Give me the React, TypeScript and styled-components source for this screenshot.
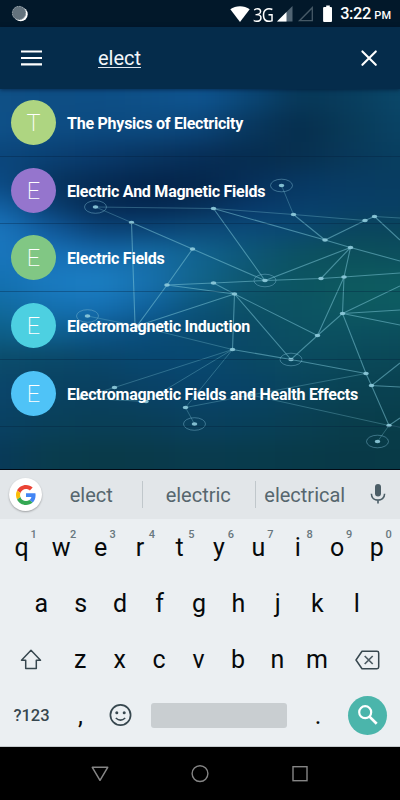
import React from "react";
import styled, { createGlobalStyle } from "styled-components";

const GlobalStyle = createGlobalStyle`
  * { box-sizing: border-box; }
  body { margin: 0; background: #000; font-family: Roboto, "Noto Sans", sans-serif; }
  svg { display: block; flex: none; }
`;

const Screen = styled.div`
  width: 400px;
  height: 800px;
  display: flex;
  flex-direction: column;
  overflow: hidden;
`;

const StatusBar = styled.header`
  height: 27px;
  flex: none;
  background: #02182a;
  display: flex;
  align-items: center;
  justify-content: space-between;
  padding: 0 9px 0 11px;
  color: #fff;
`;

const StatusGroup = styled.div`
  display: flex;
  align-items: center;
`;

const NetworkType = styled.span`
  font: 400 20.5px/26px "Open Sans", "Noto Sans", sans-serif;
  letter-spacing: -1px;
  width: 22px;
  margin: 0 2px 0 3px;
  transform: scaleX(0.82);
  transform-origin: left;
`;

const Clock = styled.span`
  font: 500 16.3px/26px Roboto, sans-serif;
  letter-spacing: -0.35px;
  margin-left: 4px;
  white-space: nowrap;
  transform: translateY(1px);
`;

const Meridiem = styled.small`
  font-size: 11px;
  letter-spacing: 0;
  margin-left: 3.5px;
`;

const AppBar = styled.div`
  height: 62px;
  flex: none;
  background: #052c4b;
  display: flex;
  align-items: center;
  padding: 0 22px 0 21px;
  z-index: 1;
  box-shadow: 0 1px 4px rgba(0, 15, 40, 0.55);
`;

const Query = styled.div`
  flex: 1;
  margin-left: 56px;
  color: #f3f7fa;
  font-size: 20px;
`;

const QueryText = styled.span`
  border-bottom: 1px solid #dfe6ee;
  display: inline-block;
  height: 22px;
  line-height: 25px;
`;

const Results = styled.main`
  height: 381px;
  flex: none;
  position: relative;
  overflow: hidden;
  background: #083f60;
  border-bottom: 1px solid #020b16;
`;

const Backdrop = styled.svg`
  position: absolute;
  inset: 0;
`;

const Row = styled.div`
  position: relative;
  height: 67.7px;
  display: flex;
  align-items: center;
  padding-left: 11px;
  border-bottom: 1px solid rgba(3, 28, 55, 0.32);
`;

const Avatar = styled.div<{ $color: string }>`
  width: 45px;
  height: 45px;
  border-radius: 50%;
  background: ${(p) => p.$color};
  color: #fff;
  font-size: 23.5px;
  font-weight: 200;
  line-height: 46px;
  text-align: center;
`;

const Title = styled.div`
  margin-left: 11px;
  color: #fff;
  font-size: 16px;
  font-weight: 700;
  letter-spacing: -0.24px;
  white-space: nowrap;
  transform: translateY(0.5px);
`;

const Suggestions = styled.div`
  height: 49px;
  flex: none;
  background: #e2e6e9;
  display: flex;
  align-items: center;
  padding: 0 14px 0 9px;
`;

const GoogleButton = styled.div`
  width: 33px;
  height: 33px;
  flex: none;
  border-radius: 50%;
  background: #fff;
  box-shadow: 0 1px 2px rgba(0, 0, 0, 0.3);
  display: flex;
  align-items: center;
  justify-content: center;
`;

const Suggestion = styled.div<{ $width: number; $divided?: boolean }>`
  width: ${(p) => p.$width}px;
  flex: none;
  height: 27px;
  padding-right: 1.5px;
  line-height: 29px;
  font-size: 20px;
  text-align: center;
  color: #56666e;
  border-left: ${(p) => (p.$divided ? "1px solid #c0c7cb" : "none")};
`;

const MicButton = styled.div`
  margin-left: auto;
`;

const Keyboard = styled.div`
  height: 228px;
  flex: none;
  background: #ebeff2;
  border-bottom: 1px solid #c5cacd;
`;

const KeyRow = styled.div<{ $inset?: number }>`
  height: 56px;
  display: flex;
  align-items: center;
  padding-left: ${(p) => p.$inset ?? 2}px;
`;

const Key = styled.div<{ $width?: number }>`
  position: relative;
  width: ${(p) => p.$width ?? 39.45}px;
  flex: none;
  height: 56px;
  padding-top: 1px;
  display: flex;
  align-items: center;
  justify-content: center;
  color: #06090b;
  font-size: 25px;
`;

const Hint = styled.span`
  position: absolute;
  top: 9px;
  left: 28.5px;
  font-size: 11px;
  font-weight: 500;
  line-height: 13px;
  color: #68777e;
`;

const Symbols = styled.div`
  width: 59px;
  text-align: center;
  color: #37474f;
  font-size: 16.5px;
  font-weight: 500;
`;

const Space = styled.div`
  width: 136px;
  height: 25px;
  margin: 0 11px;
  border-radius: 3px;
  background: #c9ced1;
`;

const SearchButton = styled.div`
  width: 39px;
  height: 39px;
  margin-left: 10px;
  border-radius: 50%;
  background: #4bb5ab;
  display: flex;
  align-items: center;
  justify-content: center;
`;

const NavBar = styled.nav`
  height: 53px;
  flex: none;
  background: #000;
  display: flex;
  align-items: center;
  justify-content: space-between;
  padding: 0 90px;
`;

const results = [
  { letter: "T", color: "#aed581", title: "The Physics of Electricity" },
  { letter: "E", color: "#9575cd", title: "Electric And Magnetic Fields" },
  { letter: "E", color: "#81c784", title: "Electric Fields" },
  { letter: "E", color: "#4dd0e1", title: "Electromagnetic Induction" },
  { letter: "E", color: "#4fc3f7", title: "Electromagnetic Fields and Health Effects" },
];

// Colour samples of the glow behind the list: one line per band, left to right every 50px.
const glow = [
  { y: 60, h: 52, tones: "0f5086 0e4e84 0d4e85 0e5189 0e5490 0a4675 073757 083d5d 0a4769" },
  { y: 112, h: 30, tones: "0e5088 0d4d84 0c4a80 0c4a80 0b4579 08375e 062e4d 083a58 094365" },
  { y: 142, h: 28, tones: "0b467b 0a4073 09396a 083460 072e57 062c50 07304f 08385a 083f60" },
  { y: 170, h: 26, tones: "0c4c86 07345f 052b54 04254c 04264b 062f59 073863 083c63 083d62" },
  { y: 196, h: 22, tones: "1363a6 0a3e70 052a52 042750 062e57 08386a 083f6c 083f68 083f64" },
  { y: 218, h: 24, tones: "1a76be 115a9c 0b4479 0b4678 0c4b7a 0b4b79 0a4870 0a465f 0a465b" },
  { y: 242, h: 26, tones: "1875bb 1872b8 156bae 156ca5 11638f 0d5777 0c5161 0c505b 0c4f5d" },
  { y: 268, h: 28, tones: "1370b0 1a7ac0 1b7fc3 176fac 116389 0d566d 0c5461 0d595f 0d5b60" },
  { y: 296, h: 24, tones: "106a9d 1470b0 1570b3 0f609a 0b5277 0c5065 0c5362 0d5961 0d5b62" },
  { y: 320, h: 26, tones: "0d5f88 0f6292 0c5589 094d7b 094a6e 0a4a66 0b5061 0b5060 0b4e5c" },
  { y: 346, h: 28, tones: "0b4c6b 0a4867 09466a 084770 084871 094864 0a4b60 0a495a 0a4756" },
  { y: 374, h: 34, tones: "0a456b 094262 09405f 094266 08436a 084366 09445c 094253 094150" },
  { y: 408, h: 32, tones: "094163 09405a 093f56 093f58 09405e 08405a 093f53 093d4b 083d4a" },
  { y: 440, h: 80, tones: "083a59 093c4d 093a49 093a4a 093b4e 083b4c 083a49 083947 083a47" },
];

const strongEdges = [
  "M131.5 222.5L192.5 249L265 280.5", "M192.5 249L167 285L137 326L234.5 294",
  "M213.5 208.5L325 240L350.5 247.5L400 261", "M213.5 208.5L265 280.5L350.5 247.5",
  "M293.5 214.5L325 240L365 220.5L374.5 216.5L400 240", "M350.5 247.5L321 278.5",
  "M350.5 247.5L344 277L342.5 313.5L317.5 335.5L291 359.5L234.5 294L317.5 335.5L344 277L400 273",
  "M265 280.5L321 278.5L344 277", "M213.5 283L234.5 294L232.5 349.5",
  "M400 286L342.5 313.5L400 310", "M400 325L342.5 313.5L366 373.5L371.5 385.5L389 425.5L400 418",
  "M400 363L371.5 385.5L400 387", "M131.5 222.5L135 324", "M167 285L213.5 283L265 280.5", "M167 285L234.5 294",
  "M232.5 349.5L291 359.5L366 373.5",
];

const faintEdges = [
  "M131.5 222.5L95.5 207L213.5 208.5L293.5 214.5L281.5 185.5", "M293.5 214.5L365 220.5",
  "M374.5 216.5L400 218",
  "M87.5 316L137 326L232.5 349.5", "M366 373.5L251 395L389 425.5L377.5 441.5",
  "M232.5 349.5L114.5 387.5L80 398L146 401.5L232.5 349.5L185.5 407.5L194.5 424",
  "M185.5 407.5L251 395", "M389 425.5L400 427",
];

const ringed = [[95.5, 207], [281.5, 185.5], [265, 280.5], [87.5, 316], [291, 359.5], [194.5, 424], [377.5, 441.5]];

const nodes = [
  ...ringed, [131.5, 222.5], [192.5, 249], [213.5, 208.5], [293.5, 214.5], [365, 220.5], [374.5, 216.5],
  [325, 240], [350.5, 247.5], [321, 278.5], [344, 277], [167, 285], [137, 326], [114.5, 387.5], [80, 398],
  [146, 401.5], [185.5, 407.5], [213.5, 283], [234.5, 294], [342.5, 313.5], [317.5, 335.5], [232.5, 349.5],
  [366, 373.5], [371.5, 385.5], [389, 425.5], [251, 395],
];

const Network = () => (
  <Backdrop width="400" height="380" viewBox="0 89 400 380" fill="none">
    <filter id="soften" filterUnits="userSpaceOnUse" x="-60" y="40" width="520" height="500" colorInterpolationFilters="sRGB">
      <feGaussianBlur stdDeviation="20 10" />
    </filter>
    <g filter="url(#soften)">
      {glow.map((band) =>
        band.tones.split(" ").map((tone, i) => (
          <rect
            key={`${band.y}-${i}`}
            x={i === 0 ? -60 : i * 50 - 25}
            y={band.y}
            width={i === 0 || i === 8 ? 86 : 51}
            height={band.h + 1}
            fill={`#${tone}`}
          />
        )),
      )}
    </g>
    <path d={strongEdges.join("")} stroke="#7fc8d8" strokeOpacity=".52" strokeWidth="1.1" />
    <path d={faintEdges.join("")} stroke="#7fc8d8" strokeOpacity=".32" />
    {ringed.map(([x, y]) => (
      <ellipse key={`${x}-${y}`} cx={x} cy={y} rx="11" ry="6.3" stroke="#7cb8d0" strokeOpacity=".45" />
    ))}
    {nodes.map(([x, y]) => (
      <ellipse key={`${x}-${y}`} cx={x} cy={y} rx="2.8" ry="1.7" fill="#8fcbdc" fillOpacity=".9" />
    ))}
  </Backdrop>
);

const topKeys = "qwertyuiop".split("");

export default function App() {
  return (
    <>
      <GlobalStyle />
      <Screen>
        <StatusBar>
          <svg width="18" height="18" viewBox="0 0 18 18">
            <circle cx="9.7" cy="9.3" r="7" fill="#fff" />
            <circle cx="8" cy="8" r="7" fill="#63727d" />
            <circle cx="8" cy="8" r="6.6" fill="none" stroke="#a2adb4" strokeWidth="1" strokeDasharray="1.3 1.3" />
          </svg>
          <StatusGroup>
            <svg width="20" height="16" viewBox="0 0 20 16">
              <path d="M0.3 3.2C5.7-.8 14.3-.8 19.7 3.2L10 16z" fill="#fff" />
            </svg>
            <NetworkType>3G</NetworkType>
            <svg width="16" height="16" viewBox="0 0 16 16">
              <path d="M15.5 0v15.5H0z" fill="#516473" />
              <path d="M9.5 6v9.5H0z" fill="#fff" />
            </svg>
            <svg width="25" height="16" viewBox="0 0 25 16">
              <path d="M19.3 1.7v13H6.5z" fill="none" stroke="#465966" strokeWidth="1.3" />
            </svg>
            <svg width="18" height="18" viewBox="0 0 18 18">
              <path d="M8.2.6h3.6v1.5h1.2q1 0 1 1V16q0 1-1 1H6.1q-1 0-1-1V3.1q0-1 1-1h2.1z" fill="#fff" />
            </svg>
            <Clock>3:22<Meridiem>PM</Meridiem></Clock>
          </StatusGroup>
        </StatusBar>

        <AppBar>
          <svg width="21" height="16" viewBox="0 0 21 16">
            <path d="M0 1.5h21M0 8h21M0 14.3h21" stroke="#fff" strokeWidth="2.2" />
          </svg>
          <Query><QueryText>elect</QueryText></Query>
          <svg width="18" height="18" viewBox="0 0 18 18">
            <path d="M2.4 2.4l13.4 13.4M15.8 2.4L2.4 15.8" stroke="#fff" strokeWidth="2.1" strokeLinecap="round" />
          </svg>
        </AppBar>

        <Results>
          <Network />
          {results.map((r) => (
            <Row key={r.title}>
              <Avatar $color={r.color}>{r.letter}</Avatar>
              <Title>{r.title}</Title>
            </Row>
          ))}
        </Results>

        <Suggestions>
          <GoogleButton>
            <svg width="20" height="20" viewBox="0 0 48 48">
              <path fill="#ea4335" d="M24 9.5c3.54 0 6.71 1.22 9.21 3.6l6.85-6.85C35.9 2.38 30.47 0 24 0 14.62 0 6.51 5.38 2.56 13.22l7.98 6.19C12.43 13.72 17.74 9.5 24 9.5z" />
              <path fill="#4285f4" d="M46.98 24.55c0-1.57-.15-3.09-.38-4.55H24v9.02h12.94c-.58 2.96-2.26 5.48-4.78 7.18l7.73 6c4.51-4.18 7.09-10.36 7.09-17.65z" />
              <path fill="#fbbc05" d="M10.53 28.59A14.5 14.5 0 0 1 9.77 24c0-1.6.27-3.14.76-4.59l-7.98-6.19A23.9 23.9 0 0 0 0 24c0 3.88.92 7.54 2.56 10.78z" />
              <path fill="#34a853" d="M24 48c6.48 0 11.93-2.13 15.89-5.81l-7.73-6c-2.15 1.45-4.92 2.3-8.16 2.3-6.26 0-11.57-4.22-13.47-9.91l-7.98 6.19C6.51 42.62 14.62 48 24 48z" />
            </svg>
          </GoogleButton>
          <Suggestion $width={100}>elect</Suggestion>
          <Suggestion $width={113} $divided>electric</Suggestion>
          <Suggestion $width={100} $divided>electrical</Suggestion>
          <MicButton>
            <svg width="16" height="21" viewBox="0 0 16 21">
              <rect x="5" y="0" width="6" height="12.5" rx="3" fill="#4c5e67" />
              <path d="M1.4 9.8c0 8.4 13.2 8.4 13.2 0M8 16V19.6" fill="none" stroke="#4c5e67" strokeWidth="1.6" />
            </svg>
          </MicButton>
        </Suggestions>

        <Keyboard>
          <KeyRow>
            {topKeys.map((k, i) => (
              <Key key={k}>{k}<Hint>{(i + 1) % 10}</Hint></Key>
            ))}
          </KeyRow>
          <KeyRow $inset={21.5}>
            {"asdfghjkl".split("").map((k) => <Key key={k}>{k}</Key>)}
          </KeyRow>
          <KeyRow>
            <Key $width={58.5}>
              <svg width="22" height="21" viewBox="0 0 22 21">
                <path d="M11 1.2L20.5 11.3H16.3V19.4H5.7V11.3H1.5z" fill="none" stroke="#37474f" strokeWidth="1.5" strokeLinejoin="round" />
              </svg>
            </Key>
            {"zxcvbnm".split("").map((k) => <Key key={k}>{k}</Key>)}
            <Key $width={62}>
              <svg width="25" height="20" viewBox="0 0 25 20">
                <path d="M7 1.3H22Q23.7 1.3 23.7 3V17Q23.7 18.7 22 18.7H7L1 10z" fill="none" stroke="#37474f" strokeWidth="1.5" strokeLinejoin="round" />
                <path d="M9.7 6l8 8M17.7 6l-8 8" stroke="#4c5b63" strokeWidth="1.7" />
              </svg>
            </Key>
          </KeyRow>
          <KeyRow>
            <Symbols>?123</Symbols>
            <Key $width={39}>,</Key>
            <Key $width={40}>
              <svg width="23" height="23" viewBox="0 0 23 23">
                <circle cx="11.5" cy="11" r="10.1" fill="none" stroke="#37474f" strokeWidth="1.7" />
                <circle cx="7.8" cy="8.7" r="1.5" fill="#37474f" />
                <circle cx="15.2" cy="8.7" r="1.5" fill="#37474f" />
                <path d="M6.8 14q4.7 4.2 9.4 0" fill="none" stroke="#37474f" strokeWidth="1.6" />
              </svg>
            </Key>
            <Space />
            <Key $width={40}>.</Key>
            <SearchButton>
              <svg width="20" height="20" viewBox="0 0 20 20">
                <circle cx="7.2" cy="7.2" r="6" fill="none" stroke="#fff" strokeWidth="2.2" />
                <path d="M11.5 11.6l7.2 7.2" stroke="#fff" strokeWidth="2.7" />
              </svg>
            </SearchButton>
          </KeyRow>
        </Keyboard>

        <NavBar>
          <svg width="20" height="18" viewBox="0 0 20 18">
            <path d="M2.3 2.3h15.4L10 15.3z" fill="none" stroke="#858585" strokeWidth="1.5" strokeLinejoin="round" />
          </svg>
          <svg width="20" height="20" viewBox="0 0 20 20">
            <circle cx="10" cy="9.6" r="7.9" fill="none" stroke="#858585" strokeWidth="1.4" />
          </svg>
          <svg width="20" height="20" viewBox="0 0 20 20">
            <rect x="3" y="2.7" width="14" height="14" fill="none" stroke="#858585" strokeWidth="1.4" />
          </svg>
        </NavBar>
      </Screen>
    </>
  );
}
